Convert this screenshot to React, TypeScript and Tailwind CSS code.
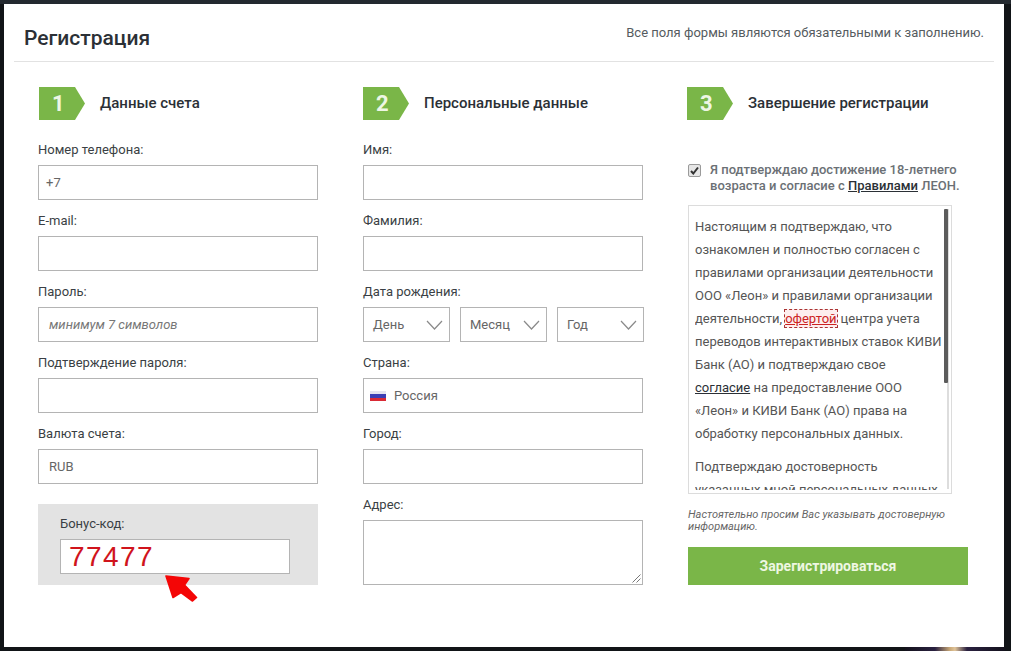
const font = "font-['Roboto',sans-serif]";

function Step({ n, title, className = "" }: { n: string; title: string; className?: string }) {
  return (
    <div className={`flex h-[33px] items-center ${className}`}>
      <div className="flex h-[33px] w-[46px] items-center bg-[#7ab648] pl-[13px] text-[22px] font-bold text-[#eef6e4] [clip-path:polygon(0_0,36px_0,46px_50%,36px_100%,0_100%)]">
        {n}
      </div>
      <div className="ml-[15px] text-[15px] font-medium text-[#2b3036]">{title}</div>
    </div>
  );
}

function Field({ label, children }: { label: string; children?: React.ReactNode }) {
  return (
    <div className="mb-[10px]">
      <div className="mb-[6px] h-5 text-[13px] leading-[22px] text-[#3a3f44]">{label}</div>
      {children ?? <Box />}
    </div>
  );
}

function Box({ children, className = "" }: { children?: React.ReactNode; className?: string }) {
  return (
    <div className={`flex h-[35px] items-center border border-[#b4b4b4] bg-white text-[13px] text-[#666] ${className}`}>
      {children}
    </div>
  );
}

function Select({ label }: { label: string }) {
  return (
    <Box className="w-[87px] justify-between pl-[9px] pr-[6px]">
      <span>{label}</span>
      <svg width="17" height="10" viewBox="0 0 17 10" fill="none" stroke="#8a8a8a" strokeWidth="1.2">
        <path d="M1 1l7.5 8L16 1" />
      </svg>
    </Box>
  );
}

function Flag() {
  return (
    <svg width="16" height="10" viewBox="0 0 16 10" className="mr-2 blur-[0.4px]">
      <rect width="16" height="3" fill="#e4e4f0" />
      <rect y="3" width="16" height="4" fill="#3b3fb5" />
      <rect y="7" width="16" height="3" fill="#d92a35" />
    </svg>
  );
}

function Column({ children, className = "" }: { children: React.ReactNode; className?: string }) {
  return <div className={`w-[280px] ${className}`}>{children}</div>;
}

function RedArrow() {
  return (
    <svg width="40" height="34" viewBox="0 0 40 34" className="absolute left-[162px] top-[572px] blur-[0.5px]">
      <path
        d="M4 4L27 6.5L22.5 13L34.5 25.5L30.5 29L19 20.5L11 25.5Z"
        fill="#f40606"
        stroke="#f40606"
        strokeWidth="1.6"
        strokeLinejoin="round"
      />
    </svg>
  );
}

export default function App() {
  return (
    <div className={`relative h-[651px] w-[1011px] overflow-hidden bg-[#111417] ${font}`}>
      <div className="h-1 bg-[#23292f]" />
      <div className="ml-1 h-[643px] w-[1000px] bg-white">
        <div className="mx-[10px] flex h-[58px] items-start justify-between border-b border-[#e2e2e2] pl-[10px] pr-[10px]">
          <h1 className="mt-[20px] text-[21px] font-medium leading-7 text-[#2b3036]">Регистрация</h1>
          <p className="mt-[19px] text-[13px] leading-5 text-[#555b60]">Все поля формы являются обязательными к заполнению.</p>
        </div>

        <div className="mt-[25px] flex gap-[45px] pl-[34px]">
          <Column>
            <Step n="1" title="Данные счета" className="ml-px" />
            <div className="mt-[19px]">
              <Field label="Номер телефона:">
                <Box className="pl-[7px]">+7</Box>
              </Field>
              <Field label="E-mail:" />
              <Field label="Пароль:">
                <Box className="pl-[10px] italic text-[#777]">минимум 7 символов</Box>
              </Field>
              <Field label="Подтверждение пароля:" />
              <Field label="Валюта счета:">
                <Box className="pl-[10px] text-[12px]">RUB</Box>
              </Field>
              <div className="mt-[20px] h-[81px] bg-[#e3e3e3] pl-[22px] pr-[28px] pt-[10px]">
                <div className="mb-[5px] h-5 text-[13px] leading-5 text-[#3a3f44]">Бонус-код:</div>
                <div className="flex h-[35px] items-center border border-[#b4b4b4] bg-white pl-[8px] font-['Liberation_Sans',sans-serif] text-[28px] tracking-[1.4px] text-[#d0141c]">
                  77477
                </div>
              </div>
            </div>
          </Column>

          <Column>
            <Step n="2" title="Персональные данные" />
            <div className="mt-[19px]">
              <Field label="Имя:" />
              <Field label="Фамилия:" />
              <Field label="Дата рождения:">
                <div className="flex w-[281px] gap-[10px]">
                  <Select label="День" />
                  <Select label="Месяц" />
                  <Select label="Год" />
                </div>
              </Field>
              <Field label="Страна:">
                <Box className="pl-[6px]">
                  <Flag />
                  Россия
                </Box>
              </Field>
              <Field label="Город:" />
              <div>
                <div className="mb-[6px] h-5 text-[13px] leading-[22px] text-[#3a3f44]">Адрес:</div>
                <div className="relative h-[65px] border border-[#b4b4b4] bg-white">
                  <svg width="9" height="9" viewBox="0 0 9 9" className="absolute bottom-[1px] right-[1px]" stroke="#555" strokeWidth="0.8">
                    <path d="M0.5 8.5L8.5 0.5M4.5 8.5L8.5 4.5" />
                  </svg>
                </div>
              </div>
            </div>
          </Column>

          <Column>
            <Step n="3" title="Завершение регистрации" className="-ml-px" />
            <div className="mt-[41px] flex">
              <div className="mt-[3px] flex h-[13px] w-[13px] items-center justify-center rounded-[2px] border border-[#9a9a9a] bg-[#e6e6e6]">
                <svg width="9" height="9" viewBox="0 0 9 9" fill="none" stroke="#333" strokeWidth="2">
                  <path d="M1 5l2.3 2.5L8 1.5" />
                </svg>
              </div>
              <div className="ml-[9px] whitespace-nowrap pt-px text-[13px] font-medium leading-4 text-[#6b7075]">
                Я подтверждаю достижение 18-летнего
                <br />
                возраста и согласие с <span className="text-[#2b3036] underline">Правилами</span> ЛЕОН.
              </div>
            </div>

            <div className="relative mt-[11px] h-[289px] w-[264px] border border-[#dcdcdc] pb-[3px] pl-[6px] pt-[9px] text-[13px] leading-[23px] text-[#555]">
              <div className="h-full overflow-hidden">
                <p className="whitespace-nowrap">
                  Настоящим я подтверждаю, что
                  <br />
                  ознакомлен и полностью согласен с
                  <br />
                  правилами организации деятельности
                  <br />
                  ООО «Леон» и правилами организации
                  <br />
                  деятельности,
                  <span className="ml-[2px] mr-[3px] inline-block h-[19px] border border-dashed border-[#a33] bg-[#fdeeee] leading-[17px] text-[#c22] underline">
                    офертой
                  </span>
                  центра учета
                  <br />
                  переводов интерактивных ставок КИВИ
                  <br />
                  Банк (АО) и подтверждаю свое
                  <br />
                  <span className="text-[#2b3036] underline">согласие</span> на предоставление ООО
                  <br />
                  «Леон» и КИВИ Банк (АО) права на
                  <br />
                  обработку персональных данных.
                </p>
                <p className="mt-[10px] whitespace-nowrap">
                  Подтверждаю достоверность
                  <br />
                  указанных мной персональных данных
                </p>
              </div>
              <div className="absolute right-[2px] top-[3px] h-[280px] w-[2px] bg-[#ddd]" />
              <div className="absolute right-[3px] top-[3px] h-[174px] w-[4px] rounded-[1px] bg-[#5c5c5c]" />
            </div>

            <p className="mt-[15px] whitespace-nowrap text-[11px] italic leading-[12px] text-[#666]">
              Настоятельно просим Вас указывать достоверную
              <br />
              информацию.
            </p>
            <button className="mt-[14px] h-[38px] w-[280px] bg-[#7ab648] text-[14px] font-bold text-[#eef7e2]">
              Зарегистрироваться
            </button>
          </Column>
        </div>
      </div>
      <div className="absolute bottom-0 left-[905px] h-1 w-[100px] bg-[linear-gradient(90deg,#14121c,#2a2140_30%,#c9a877_45%,#e0c49a_50%,#2a2140_62%,#14121c)]" />
      <RedArrow />
    </div>
  );
}
